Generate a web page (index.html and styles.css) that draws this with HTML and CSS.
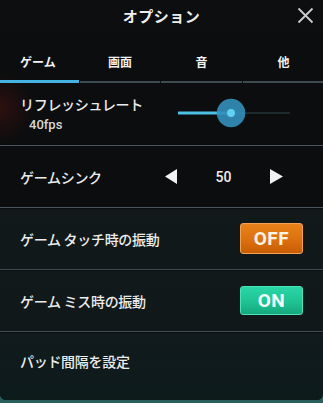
FILE: index.html
```html
<!DOCTYPE html>
<html lang="ja">
<head>
<meta charset="utf-8">
<link rel="stylesheet" href="styles.css">
</head>
<body>
<div class="panel">
  <header class="header">
    <span></span>
    <h1 class="title">オプション</h1>
    <button class="close" aria-label="閉じる">
      <svg width="17" height="17" viewBox="0 0 17 17"><path d="M1.5 1.5 L15.5 15.5 M15.5 1.5 L1.5 15.5" stroke="#c9cccd" stroke-width="1.8" fill="none"/></svg>
    </button>
  </header>
  <nav class="tabs">
    <div class="tab active">ゲーム</div>
    <div class="tab">画面</div>
    <div class="tab">音</div>
    <div class="tab">他</div>
  </nav>
  <section class="list">
    <div class="row row-refresh">
      <div class="label-block">
        <div class="label">リフレッシュレート</div>
        <div class="sub">40fps</div>
      </div>
      <svg class="slider" width="130" height="32" viewBox="0 0 130 32">
        <line x1="57" y1="16" x2="117" y2="16" stroke="#1b2a2d" stroke-width="2"/>
        <line x1="3" y1="16" x2="57" y2="16" stroke="#4cc0e6" stroke-width="3"/>
        <circle cx="57" cy="16" r="14.5" fill="#3390bd" fill-opacity="0.9"/>
        <circle cx="57" cy="16" r="4" fill="#62d2f2"/>
      </svg>
    </div>
    <div class="row row-sync">
      <div class="label label-sync">ゲームシンク</div>
      <svg class="arrow" width="12" height="15" viewBox="0 0 12 15"><polygon points="12,0 12,15 0,7.5" fill="#f2f2f2"/></svg>
      <div class="value">50</div>
      <svg class="arrow" width="13" height="15" viewBox="0 0 13 15"><polygon points="0,0 0,15 13,7.5" fill="#f2f2f2"/></svg>
    </div>
    <div class="row row-light">
      <div class="label">ゲーム タッチ時の振動</div>
      <div class="toggle off">OFF</div>
    </div>
    <div class="row row-light">
      <div class="label">ゲーム ミス時の振動</div>
      <div class="toggle on">ON</div>
    </div>
    <div class="row row-light row-last">
      <div class="label">パッド間隔を設定</div>
    </div>
  </section>
</div>
</body>
</html>
```
FILE: styles.css
```css
* { box-sizing: border-box; }
html, body {
  margin: 0;
  padding: 0;
  width: 323px;
  height: 403px;
  overflow: hidden;
}
body {
  background: #2b5f5c;
  font-family: "Noto Sans CJK JP", "Noto Sans", sans-serif;
  color: #eeeeee;
}
.panel {
  height: 400px;
  display: flex;
  flex-direction: column;
  background:
    radial-gradient(ellipse 34px 36px at 0px 108px, rgba(110, 20, 20, 0.35), rgba(110, 20, 20, 0) 100%),
    #0b0d0e;
  border-radius: 0 0 6px 6px;
  overflow: hidden;
}
.header {
  height: 32px;
  display: grid;
  grid-template-columns: 1fr auto 1fr;
  align-items: center;
  background: #0c0e0f;
}
.title {
  margin: 0;
  font-size: 15px;
  font-weight: 700;
  color: #eeeeee;
  letter-spacing: 0.5px;
  line-height: 32px;
}
.close {
  justify-self: end;
  margin-right: 9px;
  margin-top: -2px;
  background: none;
  border: 0;
  padding: 0;
  width: 17px;
  height: 17px;
  display: flex;
}
.tabs {
  margin-top: 14px;
  display: grid;
  grid-template-columns: 79px 80px 81px 81px;
  column-gap: 1px;
}
.tab {
  height: 37px;
  padding-bottom: 4px;
  display: flex;
  align-items: center;
  justify-content: center;
  font-size: 12px;
  font-weight: 700;
  color: #f2f2f2;
  border-bottom: 2px solid #3a4c52;
}
.tab.active {
  border-bottom: 3px solid #45b4e2;
  padding-bottom: 3px;
}
.tab:first-child { justify-content: flex-start; padding-left: 20px; }
.list {
  flex: 1;
  display: flex;
  flex-direction: column;
}
.row {
  height: 62px;
  display: flex;
  align-items: center;
  padding: 0 20px;
  border-bottom: 1px solid #48555a;
}
.label {
  font-size: 14px;
  font-weight: 500;
  color: #ececec;
  letter-spacing: -0.3px;
}
.row-refresh {
  height: 63px;
  padding-bottom: 3px;
}
.label-block {
  width: 158px;
  display: flex;
  flex-direction: column;
  gap: 3px;
}
.sub {
  font-family: "Roboto", "Liberation Sans", sans-serif;
  font-size: 13px;
  font-weight: 500;
  color: #d8d8d8;
  padding-left: 9px;
}
.slider { display: block; }
.row-sync { height: 62px; }
.label-sync { width: 145px; }
.arrow { display: block; }
.value {
  width: 93px;
  text-align: center;
  font-family: "Roboto", "Liberation Sans", sans-serif;
  font-size: 14px;
  font-weight: 500;
  color: #eeeeee;
}
.row-light {
  background: linear-gradient(180deg, #12191b, #10181a);
  border-bottom: 1px solid #3f4e52;
  box-shadow: inset 0 1px 0 #0a0e0f;
}
.row-last {
  flex: 1;
  align-items: flex-start;
  padding-top: 19px;
  border-bottom: 0;
  background: linear-gradient(180deg, #111a1c, #0d1b1b);
}
.toggle {
  margin-left: auto;
  width: 63px;
  height: 31px;
  border-radius: 3px;
  display: flex;
  align-items: center;
  justify-content: center;
  font-family: "Roboto", "Liberation Sans", sans-serif;
  font-size: 19px;
  font-weight: 700;
  color: #fbf3e6;
  letter-spacing: 0.5px;
}
.toggle.off {
  background: linear-gradient(180deg, #e9821a 0%, #dc7210 50%, #c85d04 100%);
  border: 1px solid #f3a252;
}
.toggle.on {
  height: 29px;
  background: linear-gradient(180deg, #2ad6a6 0%, #1fc394 55%, #16a77d 100%);
  border: 1px solid #4be3b8;
  color: #f4fffb;
}
```
